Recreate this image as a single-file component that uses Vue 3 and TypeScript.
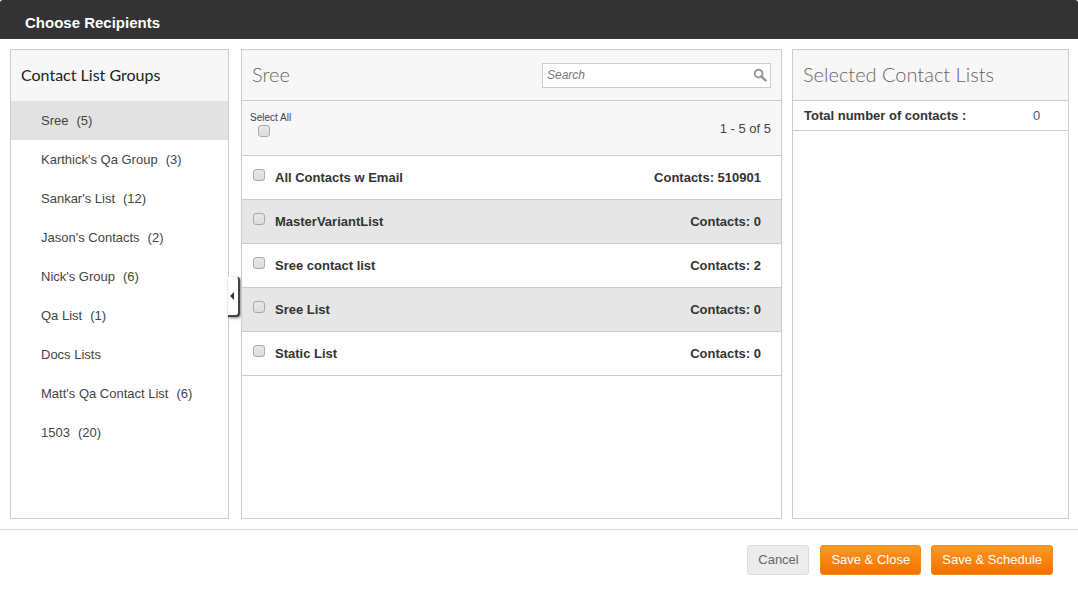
<script setup lang="ts">
const groups = [
  { name: 'Sree', count: 5 },
  { name: "Karthick's Qa Group", count: 3 },
  { name: "Sankar's List", count: 12 },
  { name: "Jason's Contacts", count: 2 },
  { name: "Nick's Group", count: 6 },
  { name: 'Qa List', count: 1 },
  { name: 'Docs Lists', count: null },
  { name: "Matt's Qa Contact List", count: 6 },
  { name: '1503', count: 20 },
]
const lists = [
  { name: 'All Contacts w Email', contacts: 510901 },
  { name: 'MasterVariantList', contacts: 0 },
  { name: 'Sree contact list', contacts: 2 },
  { name: 'Sree List', contacts: 0 },
  { name: 'Static List', contacts: 0 },
]
</script>

<template>
  <div class="dialog">
    <header class="topbar">Choose Recipients</header>
    <main class="panels">
      <section class="panel left">
        <h2 class="left-title">Contact List Groups</h2>
        <ul class="groups">
          <li v-for="(g, i) in groups" :key="g.name" class="group" :class="{ active: i === 0 }">
            {{ g.name }}<span v-if="g.count !== null" class="count">({{ g.count }})</span>
          </li>
        </ul>
        <div class="toggle"><span class="arrow"></span></div>
      </section>

      <section class="panel middle">
        <div class="head">
          <h2 class="title">Sree</h2>
          <div class="search">
            <span class="search-text">Search</span>
            <svg class="search-icon" width="14" height="14" viewBox="0 0 14 14">
              <circle cx="5.6" cy="5.6" r="3.9" fill="none" stroke="#999" stroke-width="2" />
              <path d="M8.5 8.5 L12.4 12.4" stroke="#999" stroke-width="2.6" stroke-linecap="round" />
            </svg>
          </div>
        </div>
        <div class="selectbar">
          <div class="select-all">
            <span class="select-label">Select All</span>
            <span class="check"></span>
          </div>
          <span class="paging">1 - 5 of 5</span>
        </div>
        <div v-for="(l, i) in lists" :key="l.name" class="row" :class="{ alt: i % 2 === 1 }">
          <span class="check row-check"></span>
          <span class="row-name">{{ l.name }}</span>
          <span class="row-count">Contacts: {{ l.contacts }}</span>
        </div>
      </section>

      <section class="panel right">
        <div class="head"><h2 class="title">Selected Contact Lists</h2></div>
        <div class="total">
          <span class="total-label">Total number of contacts :</span>
          <span class="total-value">0</span>
        </div>
      </section>
    </main>
    <footer class="footer">
      <button class="btn cancel">Cancel</button>
      <button class="btn save close">Save &amp; Close</button>
      <button class="btn save">Save &amp; Schedule</button>
    </footer>
  </div>
</template>

<style scoped>
.dialog {
  width: 1078px;
  height: 589px;
  overflow: hidden;
  background: #fff;
  font-family: "Liberation Sans", Arial, sans-serif;
  color: #333;
}
.topbar {
  height: 39px;
  box-sizing: border-box;
  padding: 14px 0 0 25px;
  background: #333;
  color: #fff;
  font-size: 15px;
  font-weight: 700;
  line-height: 17px;
  border-radius: 3px 3px 0 0;
}
.panels {
  display: flex;
  height: 470px;
  margin: 10px 9px 0 10px;
}
.panel {
  position: relative;
  box-sizing: border-box;
  height: 470px;
  border: 1px solid #ccc;
  background: #fff;
}
.left { width: 219px; margin-right: 12px; }
.middle { width: 541px; margin-right: 10px; }
.right { width: 277px; }
.left-title {
  height: 51px;
  margin: 0;
  padding-left: 10px;
  background: #f7f7f7;
  font-family: Lato, sans-serif;
  font-size: 16px;
  font-weight: 400;
  line-height: 49px;
  color: #222;
}
.groups { list-style: none; margin: 0; padding: 0; }
.group {
  height: 39px;
  padding-left: 30px;
  font-size: 13px;
  line-height: 39px;
  color: #444;
}
.group.active { background: #e2e2e2; }
.count { margin-left: 8px; }
.toggle {
  position: absolute;
  left: 217px;
  top: 227px;
  width: 10px;
  height: 38px;
  background: #fff;
  border-right: 2px solid #444;
  border-bottom: 2px solid #444;
  border-radius: 0 3px 4px 0;
  box-shadow: 1px 1px 3px rgba(0, 0, 0, 0.5);
}
.arrow {
  position: absolute;
  left: 2px;
  top: 15px;
  border-top: 4px solid transparent;
  border-bottom: 4px solid transparent;
  border-right: 4px solid #333;
}
.head {
  display: flex;
  align-items: center;
  justify-content: space-between;
  height: 51px;
  box-sizing: border-box;
  padding: 0 10px;
  background: #f7f7f7;
  border-bottom: 1px solid #ccc;
}
.title {
  margin: 0;
  font-family: Lato, sans-serif;
  font-size: 20px;
  font-weight: 300;
  color: #666;
  position: relative;
  top: -1px;
}
.search {
  position: relative;
  width: 229px;
  height: 25px;
  box-sizing: border-box;
  border: 1px solid #ccc;
  background: #fff;
  font-size: 12px;
  font-style: italic;
  line-height: 23px;
  color: #777;
  padding-left: 4px;
}
.search-icon { position: absolute; right: 3px; top: 4px; }
.selectbar {
  display: flex;
  justify-content: space-between;
  height: 55px;
  box-sizing: border-box;
  padding: 0 10px 0 8px;
  background: #f7f7f7;
  border-bottom: 1px solid #ccc;
}
.select-all { display: flex; flex-direction: column; align-items: flex-start; padding-top: 11px; }
.select-label { font-size: 10px; line-height: 11px; color: #444; }
.select-all .check { margin: 2px 0 0 8px; }
.paging { font-size: 13px; line-height: 55px; color: #444; }
.check {
  display: block;
  flex: none;
  width: 12px;
  height: 12px;
  box-sizing: border-box;
  border: 1px solid #aaa;
  border-radius: 3px;
  background: linear-gradient(#e8e8e8, #dcdcdc);
}
.row {
  display: flex;
  align-items: center;
  height: 44px;
  box-sizing: border-box;
  padding: 0 20px 0 11px;
  border-bottom: 1px solid #ccc;
  font-size: 13px;
  font-weight: 700;
  color: #333;
}
.row.alt { background: #e6e6e6; }
.row-check { margin-top: -5px; margin-right: 10px; }
.row-name { flex: 1; }
.total {
  display: flex;
  height: 30px;
  box-sizing: border-box;
  padding-left: 11px;
  border-bottom: 1px solid #ccc;
  font-size: 13px;
  line-height: 29px;
}
.total-label { width: 229px; font-weight: 700; color: #333; }
.total-value { color: #33628c; }
.footer {
  display: flex;
  justify-content: flex-end;
  gap: 10px;
  height: 59px;
  margin-top: 10px;
  box-sizing: border-box;
  padding: 15px 25px 0 0;
  border-top: 1px solid #ddd;
}
.btn {
  height: 30px;
  box-sizing: border-box;
  padding: 0 10px;
  border-radius: 3px;
  font-family: "Liberation Sans", Arial, sans-serif;
  font-size: 13px;
  line-height: 28px;
}
.cancel {
  width: 62px;
  margin-right: 1px;
  border: 1px solid #ddd;
  background: #ececec;
  color: #666;
}
.save {
  border: 1px solid #f08a1c;
  background: linear-gradient(#fb9a22, #f76f00);
  color: #fff;
}
.close { width: 101px; padding: 0; }
</style>
